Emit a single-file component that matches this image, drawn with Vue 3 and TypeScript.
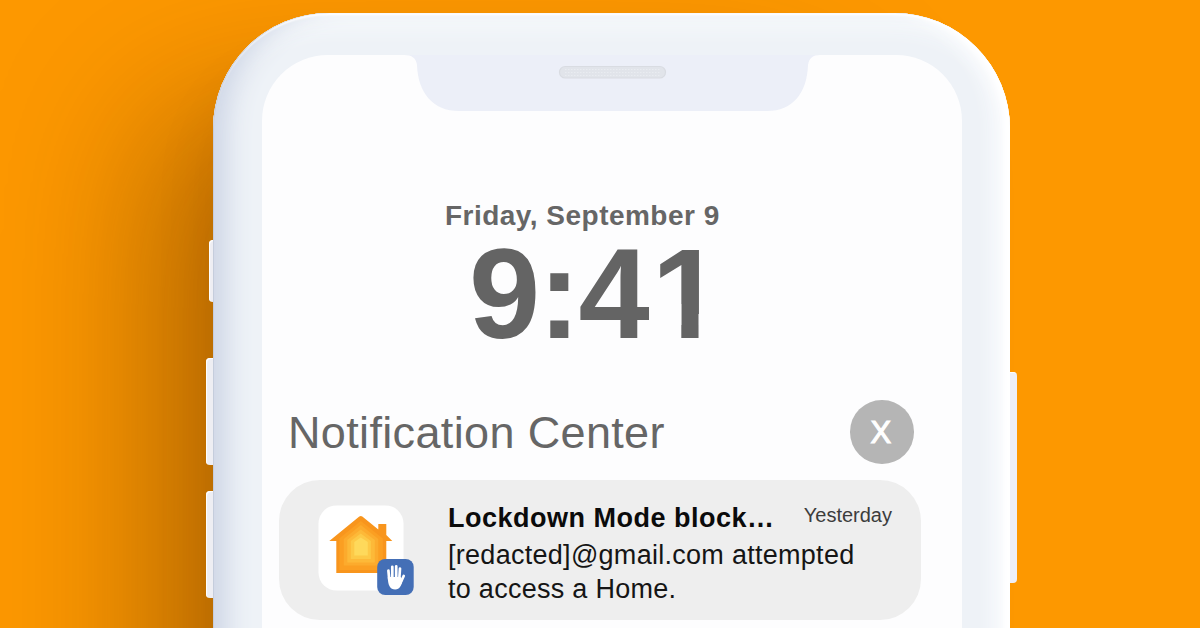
<script setup lang="ts">
interface Notice {
  title: string
  time: string
  lines: string[]
}

const date = 'Friday, September 9'
const notice: Notice = {
  title: 'Lockdown Mode block…',
  time: 'Yesterday',
  lines: ['[redacted]@gmail.com attempted', 'to access a Home.'],
}
const sideButtons: string[] = ['mute', 'volume-up', 'volume-down', 'power']
</script>

<template>
  <main class="stage">
    <div class="phone">
      <i v-for="b in sideButtons" :key="b" class="side" :class="b"></i>
      <div class="body">
        <div class="screen">
          <svg class="notch" width="416" height="57" viewBox="0 0 416 57">
            <path d="M0 0H416C409 0 405 3 404 10C403 38 389 56 363 56H55C29 56 14 38 13 10C12 3 8 0 0 0Z" fill="#eceff8" />
            <rect x="155.500" y="11.500" width="106" height="11.500" rx="5.700" fill="#e1e4ea" stroke="#d9dce2" stroke-width="1.200" />
            <path d="M161 14.500H256M161 17.500H256M161 20.500H256" stroke="#e9ecf1" stroke-width="1" stroke-dasharray="1.500 1.500" />
          </svg>
          <div class="date">{{ date }}</div>
          <div class="clock"><span class="lead">9:4</span><span class="one">1</span></div>
          <div class="head">
            <h1>Notification Center</h1>
            <button class="close">X</button>
          </div>
          <article class="card">
            <div class="app">
              <svg width="96" height="91" viewBox="0 0 96 91">
                <defs>
                  <clipPath id="house"><path d="M10.500 46 40.500 21.500Q42 20.300 43.500 21.500L59.500 34.500V29H67.500V40L73.500 46H67.500V78H17.500V46Z" /></clipPath>
                </defs>
                <rect x="0.500" y="0.500" width="85" height="85" rx="18" fill="#fff" />
                <g clip-path="url(#house)" transform="translate(.8 -10)">
                  <rect width="96" height="91" fill="#f8951d" />
                  <path d="M20.500 43.500 42 26 64 43.500V75H20.500Z" fill="#fb9f22" />
                  <path d="M25 44 42 30 59.500 44V70.500H25Z" fill="#fcab2d" />
                  <path d="M28.500 45 42 34.500 56 45V67.500H28.500Z" fill="#fdb938" />
                  <path d="M32 46 42 38.500 52 46V64H32Z" fill="#fdc947" />
                  <path d="M35.500 47 42 42.500 49 47V60.500H35.500Z" fill="#fed95b" />
                </g>
                <g transform="translate(.7 0)">
                  <rect x="58.500" y="54" width="36.500" height="36" rx="8" fill="#446fb6" />
                  <path d="M69.700 65.500 70.500 74M73.600 61.800V73M77.500 61.300V73M81.300 63.500 80.600 74M85 71 81.800 78" fill="none" stroke="#fff" stroke-width="2.700" stroke-linecap="round" />
                  <path d="M69.100 72H82L83.800 75C82.800 80.500 81 84.500 76.500 84.500C71.300 84.500 69.100 80 69.100 72Z" fill="#fff" />
                </g>
              </svg>
            </div>
            <div class="copy">
              <div class="top">
                <strong>{{ notice.title }}</strong>
                <time>{{ notice.time }}</time>
              </div>
              <p v-for="line in notice.lines" :key="line">{{ line }}</p>
            </div>
          </article>
        </div>
      </div>
    </div>
  </main>
</template>

<style>
body { margin: 0; }
</style>

<style scoped>
.stage {
  width: 1200px;
  height: 628px;
  overflow: hidden;
  box-sizing: border-box;
  padding: 13px 0 0 213px;
  background: #fd9800;
  font-family: "Liberation Sans", Arial, sans-serif;
}
.phone {
  position: relative;
  width: 797px;
  height: 900px;
  border-radius: 116px;
  box-shadow: -120px 40px 160px -60px rgba(50, 20, 0, .36), -24px 40px 60px -20px rgba(60, 25, 0, .08);
}
.body {
  position: relative;
  box-sizing: border-box;
  height: 900px;
  padding: 42px 48px 0 49px;
  border-radius: 116px;
  background: #eef2f7;
  box-shadow:
    inset 1px 0 1px #c3cada,
    inset 0 2px 2px #fff,
    inset -6px 0 6px #fff,
    inset 26px 0 26px -12px #ced6e6,
    inset -26px 0 18px -10px #fbfcfe,
    inset 0 22px 22px -10px #f9fbfc;
}
.side {
  position: absolute;
  background: #eeeef3;
  border-radius: 4px;
  box-shadow: inset 1px 1px 1px #fff;
}
.mute { left: -4px; top: 227px; width: 9px; height: 62px; }
.volume-up { left: -7px; top: 345px; width: 12px; height: 107px; }
.volume-down { left: -7px; top: 478px; width: 12px; height: 107px; }
.power { right: -7px; top: 359px; width: 12px; height: 211px; background: #eeeff7; }
.screen {
  position: relative;
  box-sizing: border-box;
  width: 700px;
  height: 850px;
  padding: 143px 41px 0 17px;
  border-radius: 66px;
  background: #fdfdfe;
}
.notch { position: absolute; left: 142px; top: 0; }
.date {
  margin-left: 166px;
  font-size: 28px;
  line-height: 36px;
  font-weight: 700;
  letter-spacing: .48px;
  color: #666;
  white-space: nowrap;
}
.clock {
  display: flex;
  margin: 10px 0 0 190px;
  height: 100px;
  font-size: 128px;
  line-height: 100px;
  font-weight: 700;
  color: #646464;
}
.clock span { display: block; }
.lead { letter-spacing: -2.2px; }
.one {
  margin-left: 4px;
  clip-path: polygon(0 0, 100% 0, 100% 70%, 66.2% 70%, 66.2% 100%, 42% 100%, 42% 60%, 0 60%);
}
.head {
  display: flex;
  align-items: center;
  justify-content: space-between;
  height: 64px;
  margin: 56px 7.500px 0 9px;
}
h1 {
  margin: 1px 0 0;
  font-size: 45px;
  font-weight: 400;
  letter-spacing: .35px;
  color: #666;
  white-space: nowrap;
}
.close {
  width: 63.500px;
  height: 63.500px;
  padding: 1px 2px 0 0;
  border: 0;
  border-radius: 50%;
  background: #b5b5b5;
  color: #fff;
  font: 31px/64px "Liberation Sans", Arial, sans-serif;
  -webkit-text-stroke: 1.1px #fff;
}
.card {
  display: flex;
  box-sizing: border-box;
  width: 642px;
  height: 140px;
  margin-top: 16px;
  padding: 21px 29px 0 39px;
  border-radius: 41px;
  background: #eee;
}
.app { width: 130px; padding-top: 4px; }
.app svg { display: block; }
.copy { flex: 1; }
.top { display: flex; justify-content: space-between; height: 38px; }
strong {
  font-size: 27px;
  line-height: 34px;
  letter-spacing: .5px;
  color: #0b0b0b;
  white-space: nowrap;
}
time {
  margin-top: -3px;
  font-size: 20px;
  line-height: 34px;
  color: #3c3c3c;
}
p {
  margin: 0;
  font-size: 27px;
  line-height: 33.500px;
  color: #151515;
  white-space: nowrap;
  letter-spacing: .28px;
}
</style>
